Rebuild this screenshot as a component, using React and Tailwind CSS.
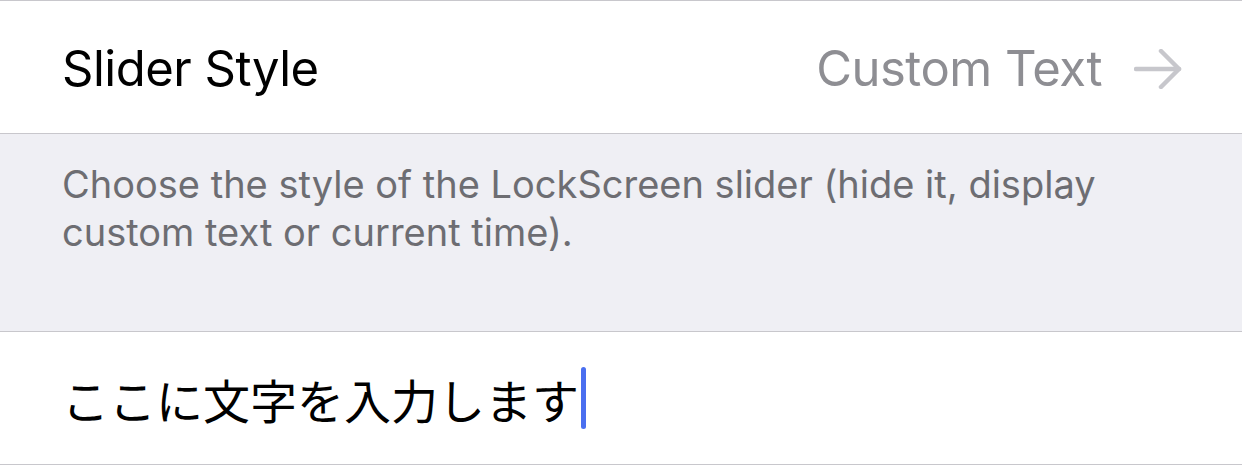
const ArrowRight = () => (
  <svg width="48" height="40" viewBox="0 0 48 40" fill="none" stroke="#c7c7cc" strokeWidth="4.5" strokeLinecap="round" strokeLinejoin="round">
    <path d="M2 20 H45" />
    <path d="M27 2 L45 20 L27 38" />
  </svg>
);

export default function App() {
  return (
    <div className="w-[1242px] h-[467px] bg-white font-['Inter','Noto_Sans',sans-serif] overflow-hidden">
      <div className="h-[134px] border-y border-[#c8c7cc] flex items-center justify-between pl-[62px] pr-[60px] pt-[4px]">
        <span className="text-[49px] text-black tracking-[-0.5px]">Slider Style</span>
        <div className="flex items-center gap-[32px]">
          <span className="text-[49px] text-[#8e8e93] tracking-[-0.5px]">Custom Text</span>
          <ArrowRight />
        </div>
      </div>
      <div className="h-[198px] bg-[#efeff4] border-b border-[#c8c7cc] pl-[62px] pr-[100px] pt-[26px]">
        <p className="text-[38px] leading-[48px] text-[#6d6d72]">
          Choose the style of the LockScreen slider (hide it, display custom text or current time).
        </p>
      </div>
      <div className="h-[133px] border-b border-[#c8c7cc] flex items-center pl-[62px]">
        <span className="text-[47px] text-black font-['Noto_Sans_CJK_JP',sans-serif] leading-none">ここに文字を入力します</span>
        <span className="w-[5px] h-[62px] rounded-full bg-[#4a6ff0] ml-[2px]" />
      </div>
    </div>
  );
}
